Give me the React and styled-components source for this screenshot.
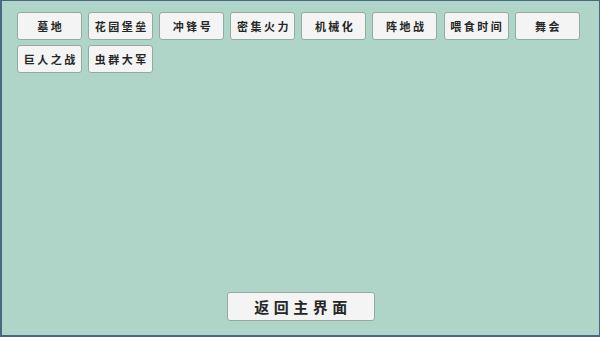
import React from "react";
import styled, { createGlobalStyle } from "styled-components";

const Global = createGlobalStyle`
  html, body { margin: 0; padding: 0; background: #afd5c8; }
  body { font-family: "Noto Sans CJK SC", "Noto Sans", sans-serif; }
`;

const Frame = styled.div`
  box-sizing: border-box;
  width: 600px;
  height: 337px;
  background: #afd5c8;
  border-top: 1px solid #4b6680;
  border-left: 2px solid #4b6680;
  border-right: 1px solid #4b6680;
  border-bottom: 2px solid #4b6680;
  display: flex;
  flex-direction: column;
  justify-content: space-between;
  padding: 11px 0 14px 15px;
`;

const Grid = styled.div`
  display: grid;
  grid-template-columns: repeat(8, 65px);
  column-gap: 6.1px;
  row-gap: 5px;
`;

const LevelButton = styled.button`
  box-sizing: border-box;
  height: 28px;
  background: #f4f4f4;
  border: 1px solid #93a9a2;
  border-radius: 3px;
  font-family: "Noto Sans CJK SC", sans-serif;
  font-weight: 700;
  font-size: 11px;
  letter-spacing: 2.5px;
  padding: 0 0 0 2.5px;
  color: #262626;
  display: flex;
  align-items: center;
  justify-content: center;
  white-space: nowrap;
`;

const Footer = styled.div`
  display: flex;
  justify-content: center;
  padding-right: 14px;
`;

const BackButton = styled.button`
  box-sizing: border-box;
  width: 148px;
  height: 29px;
  background: #f4f4f4;
  border: 1px solid #93a9a2;
  border-radius: 3px;
  font-family: "Noto Sans CJK SC", sans-serif;
  font-weight: 700;
  font-size: 15px;
  letter-spacing: 4.5px;
  padding: 0 0 0 4px;
  color: #262626;
  display: flex;
  align-items: center;
  justify-content: center;
`;

const levels = [
  "墓地", "花园堡垒", "冲锋号", "密集火力", "机械化", "阵地战", "喂食时间", "舞会",
  "巨人之战", "虫群大军",
];

export default function App() {
  return (
    <>
      <Global />
      <Frame>
        <Grid>
          {levels.map((l) => (
            <LevelButton key={l}>{l}</LevelButton>
          ))}
        </Grid>
        <Footer>
          <BackButton>返回主界面</BackButton>
        </Footer>
      </Frame>
    </>
  );
}
